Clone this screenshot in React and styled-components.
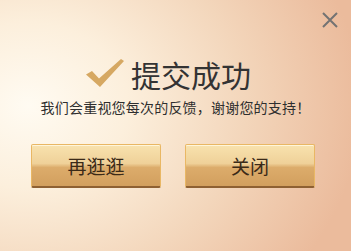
import React from "react"
import styled, { createGlobalStyle } from "styled-components"

const Global = createGlobalStyle`
  html, body {
    margin: 0;
    padding: 0;
  }
  body {
    font-family: "Microsoft YaHei", "Noto Sans CJK SC", "Noto Sans", sans-serif;
  }
`

const Dialog = styled.div`
  width: 351px;
  height: 251px;
  box-sizing: border-box;
  display: flex;
  flex-direction: column;
  align-items: center;
  background: radial-gradient(ellipse 95% 110% at 8% 42%, #fffbf2 0%, #fcefdc 30%, #f3d6bb 65%, #ebbb9c 100%);
  overflow: hidden;
`

const Header = styled.div`
  align-self: stretch;
  display: flex;
  justify-content: flex-end;
  padding: 11px 13px 0 0;
`

const CloseButton = styled.button`
  width: 17px;
  height: 17px;
  padding: 0;
  border: 0;
  background: none;
  cursor: pointer;
  display: flex;
  align-items: center;
  justify-content: center;
`

const TitleRow = styled.div`
  display: flex;
  align-items: center;
  gap: 5px;
  margin-top: 31px;
  margin-left: -14px;
`

const Title = styled.h1`
  margin: 0;
  font-size: 30px;
  line-height: 30px;
  font-weight: 400;
  color: #333333;
`

const Message = styled.p`
  margin: 11px 0 0;
  font-size: 14px;
  line-height: 14px;
  color: #2e2e2e;
  letter-spacing: 0.2px;
`

const Actions = styled.div`
  display: flex;
  gap: 24px;
  margin-top: 30px;
  margin-left: -5px;
`

const Button = styled.button`
  width: 130px;
  height: 44px;
  box-sizing: border-box;
  border: 1px solid #e9b764;
  border-bottom: 2px solid #8e6032;
  border-radius: 2px;
  background: linear-gradient(to bottom, #f8e2ae 0%, #efd199 45%, #dcac6b 55%, #d29f5e 100%);
  box-shadow: inset 0 1px 0 rgba(255, 250, 230, 0.8);
  font-family: inherit;
  font-size: 19px;
  color: #3b2a18;
  cursor: pointer;
  padding: 0;
`

const CheckMark = () => (
  <svg width="40" height="30" viewBox="0 0 40 30">
    <path d="M0 15.5 L6 12 L13 19.5 L35 0 L38 2 L14 28 Z" fill="#d6a862" />
  </svg>
)

const CloseIcon = () => (
  <svg width="16" height="16" viewBox="0 0 16 16">
    <path d="M1 1 L15 15 M15 1 L1 15" stroke="#737373" strokeWidth="2" />
  </svg>
)

export default function App() {
  return (
    <>
      <Global />
      <Dialog>
        <Header>
          <CloseButton aria-label="关闭">
            <CloseIcon />
          </CloseButton>
        </Header>
        <TitleRow>
          <CheckMark />
          <Title>提交成功</Title>
        </TitleRow>
        <Message>我们会重视您每次的反馈，谢谢您的支持！</Message>
        <Actions>
          <Button>再逛逛</Button>
          <Button>关闭</Button>
        </Actions>
      </Dialog>
    </>
  )
}
